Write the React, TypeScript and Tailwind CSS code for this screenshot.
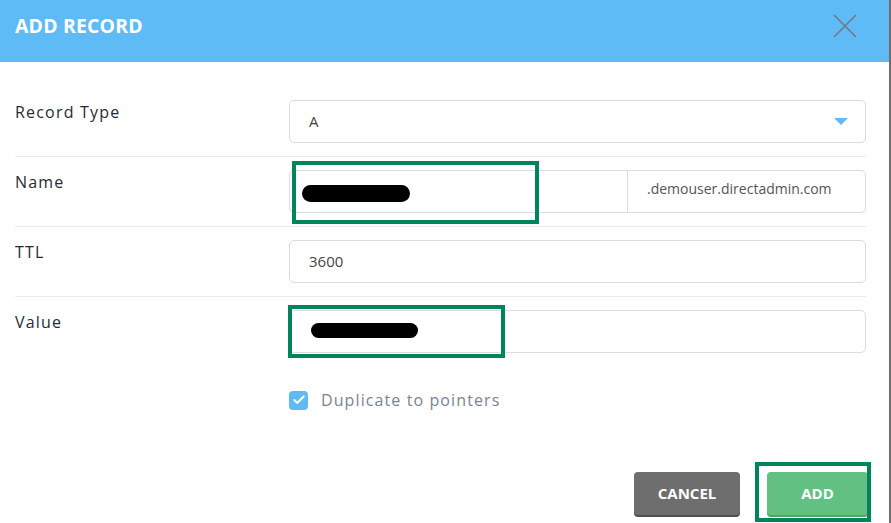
import { Check } from "lucide-react";

const labelFont = { fontFamily: '"Open Sans", "Noto Sans", sans-serif' };

function Redaction({ className }: { className: string }) {
  return <div className={`absolute rounded-full bg-black ${className}`} />;
}

function FormRow({ label, children, last }: { label: string; children: React.ReactNode; last?: boolean }) {
  return (
    <div className={`flex items-start py-[13px] ${last ? "" : "border-b border-[#ebebeb]"}`}>
      <div className="w-[274px] shrink-0 text-[16px] leading-[24px] tracking-[1.2px] text-[#262b33]">{label}</div>
      <div className="flex-1">{children}</div>
    </div>
  );
}

export default function App() {
  return (
    <div className="relative h-[523px] w-[891px] overflow-hidden bg-white" style={labelFont}>
      {/* right edge line */}
      <div className="absolute right-0 top-0 h-full w-[2px] bg-[#6e6e6e]" />

      <div className="flex h-[62px] items-center justify-between bg-[#5fbbf5] pl-[15px] pr-[34px]">
        <h1 className="pb-[10px] text-[19.4px] font-bold tracking-[0.2px] text-white">ADD RECORD</h1>
        <svg width="24" height="24" viewBox="0 0 24 24" className="mb-[10px]">
          <path d="M1 1L23 23M23 1L1 23" stroke="#707a80" strokeWidth="1.6" />
        </svg>
      </div>

      <div className="relative pl-[15px] pr-[25px] pt-[25px]">
        <FormRow label="Record Type">
          <div className="flex h-[43px] items-center justify-between rounded-[5px] border border-[#dcdcdc] pl-[19px] pr-[17px] text-[15px] text-[#444]">
            <span>A</span>
            <svg width="14" height="8" viewBox="0 0 14 8">
              <path d="M0 0H14L7 7Z" fill="#5fbbf5" />
            </svg>
          </div>
        </FormRow>
        <FormRow label="Name">
          <div className="flex h-[43px] rounded-[5px] border border-[#dcdcdc] text-[14px] text-[#555]">
            <div className="w-[338px] border-r border-[#dcdcdc]" />
            <div className="flex flex-1 items-center overflow-hidden pl-[19px] pb-[6px]">
              <span className="whitespace-nowrap">.demouser.directadmin.com</span>
            </div>
          </div>
        </FormRow>
        <FormRow label="TTL">
          <div className="flex h-[43px] items-center rounded-[5px] border border-[#dcdcdc] pl-[19px] text-[15px] text-[#444]">3600</div>
        </FormRow>
        <FormRow label="Value" last>
          <div className="h-[43px] rounded-[5px] border border-[#dcdcdc]" />
        </FormRow>

        <div className="mt-[22px] flex items-center pl-[274px]">
          <div className="flex h-[19px] w-[19px] items-center justify-center rounded-[4px] bg-[#5fbbf5]">
            <Check size={14} strokeWidth={3.5} color="white" />
          </div>
          <span className="ml-[13px] text-[16px] tracking-[1.1px] text-[#7a8394]">Duplicate to pointers</span>
        </div>

        <div className="mt-[60px] flex justify-end gap-[25px]">
          <button className="mr-[2px] h-[43px] w-[106px] rounded-[4px] bg-[#6d6e6d] text-[15px] font-bold text-white shadow-[0_2px_0_#4f504f]">CANCEL</button>
          <button className="mr-[-2px] h-[43px] w-[101px] rounded-[4px] bg-[#62c083] text-[15px] font-bold text-white shadow-[0_2px_0_#4fa56d]">ADD</button>
        </div>
      </div>

      {/* redactions */}
      <Redaction className="left-[302px] top-[185px] h-[17px] w-[108px]" />
      <Redaction className="left-[311px] top-[323px] h-[15px] w-[107px]" />

      {/* annotation boxes */}
      <div className="absolute left-[292px] top-[161px] h-[63px] w-[247px] border-[4px] border-[#00855a]" />
      <div className="absolute left-[288px] top-[305px] h-[53px] w-[217px] border-[4px] border-[#00855a]" />
      <div className="absolute left-[755px] top-[462px] h-[60px] w-[116px] border-[4px] border-[#00855a]" />
    </div>
  );
}
